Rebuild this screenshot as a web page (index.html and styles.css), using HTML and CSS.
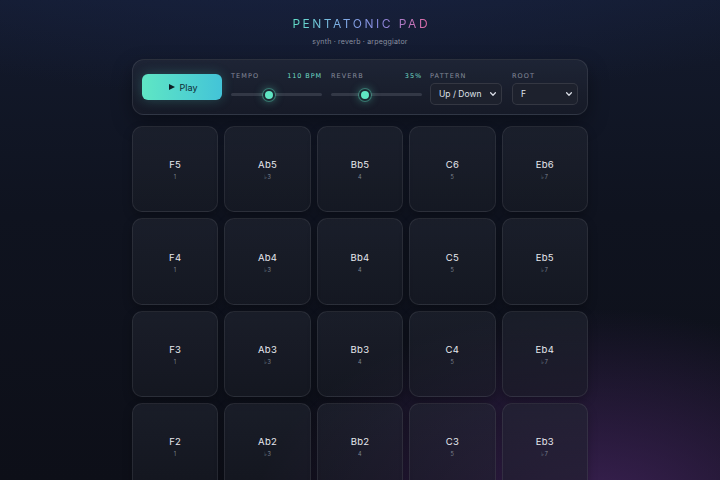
FILE: index.html
```html
<!DOCTYPE html>
<html>
<head>
<meta charset="utf-8">
<link rel="stylesheet" href="styles.css">
</head>
<body>
<main class="app">
  <header class="head">
    <h1 class="title">PENTATONIC PAD</h1>
    <p class="sub">synth · reverb · arpeggiator</p>
  </header>
  <section class="panel">
    <button class="play"><span class="tri"></span>Play</button>
    <div class="ctl slider-ctl">
      <div class="lbl"><span>TEMPO</span><span class="val">110 BPM</span></div>
      <div class="track"><span class="thumb" style="left:42%"></span></div>
    </div>
    <div class="ctl slider-ctl">
      <div class="lbl"><span>REVERB</span><span class="val">35%</span></div>
      <div class="track"><span class="thumb" style="left:37%"></span></div>
    </div>
    <div class="ctl sel-ctl pattern">
      <div class="lbl"><span>PATTERN</span></div>
      <div class="select"><span>Up / Down</span><svg viewBox="0 0 10 10" width="8" height="8"><path d="M2 3.5 L5 6.5 L8 3.5" fill="none" stroke="#d8dce4" stroke-width="1.6" stroke-linecap="round" stroke-linejoin="round"/></svg></div>
    </div>
    <div class="ctl sel-ctl root">
      <div class="lbl"><span>ROOT</span></div>
      <div class="select"><span>F</span><svg viewBox="0 0 10 10" width="8" height="8"><path d="M2 3.5 L5 6.5 L8 3.5" fill="none" stroke="#d8dce4" stroke-width="1.6" stroke-linecap="round" stroke-linejoin="round"/></svg></div>
    </div>
  </section>
  <section class="grid">
    <div class="pad"><span class="n">F5</span><span class="d">1</span></div>
    <div class="pad"><span class="n">Ab5</span><span class="d">♭3</span></div>
    <div class="pad"><span class="n">Bb5</span><span class="d">4</span></div>
    <div class="pad"><span class="n">C6</span><span class="d">5</span></div>
    <div class="pad"><span class="n">Eb6</span><span class="d">♭7</span></div>
    <div class="pad"><span class="n">F4</span><span class="d">1</span></div>
    <div class="pad"><span class="n">Ab4</span><span class="d">♭3</span></div>
    <div class="pad"><span class="n">Bb4</span><span class="d">4</span></div>
    <div class="pad"><span class="n">C5</span><span class="d">5</span></div>
    <div class="pad"><span class="n">Eb5</span><span class="d">♭7</span></div>
    <div class="pad"><span class="n">F3</span><span class="d">1</span></div>
    <div class="pad"><span class="n">Ab3</span><span class="d">♭3</span></div>
    <div class="pad"><span class="n">Bb3</span><span class="d">4</span></div>
    <div class="pad"><span class="n">C4</span><span class="d">5</span></div>
    <div class="pad"><span class="n">Eb4</span><span class="d">♭7</span></div>
    <div class="pad"><span class="n">F2</span><span class="d">1</span></div>
    <div class="pad"><span class="n">Ab2</span><span class="d">♭3</span></div>
    <div class="pad"><span class="n">Bb2</span><span class="d">4</span></div>
    <div class="pad"><span class="n">C3</span><span class="d">5</span></div>
    <div class="pad"><span class="n">Eb3</span><span class="d">♭7</span></div>
  </section>
</main>
</body>
</html>
```
FILE: styles.css
```css
* { box-sizing: border-box; }
html, body { margin: 0; height: 100%; }
body {
  overflow: hidden;
  font-family: Inter, "Noto Sans", sans-serif;
  color: #e4e7ee;
  background:
    radial-gradient(ellipse 480px 300px at 82% 108%, rgba(72, 38, 100, 0.8), rgba(72,38,100,0) 70%),
    radial-gradient(ellipse 900px 260px at 45% -20%, rgba(26, 38, 74, 0.95), rgba(26,38,74,0) 75%),
    linear-gradient(180deg, #131a2d 0%, #0f131f 45%, #0d0f18 100%);
}
.app {
  width: 456px;
  margin: 0 auto;
  padding-top: 16px;
}
.head { display: flex; flex-direction: column; align-items: center; }
.title {
  margin: 0;
  font-size: 12px;
  font-weight: 400;
  letter-spacing: 2.5px;
  line-height: 16px;
  background: linear-gradient(90deg, #5fe3c6 0%, #7fb0e8 35%, #8a88e0 65%, #e46aa4 100%);
  -webkit-background-clip: text;
  background-clip: text;
  color: transparent;
  padding-left: 2.5px;
}
.sub {
  margin: 5px 0 0;
  font-size: 7px;
  line-height: 10px;
  color: #8a90a0;
  letter-spacing: 0.2px;
}
.panel {
  margin-top: 12px;
  height: 56px;
  border-radius: 12px;
  border: 1px solid rgba(255,255,255,0.09);
  background: linear-gradient(180deg, rgba(34,40,56,0.75), rgba(24,28,40,0.75));
  box-shadow: 0 8px 20px rgba(0,0,0,0.35);
  display: flex;
  align-items: center;
  padding: 0 9px;
  gap: 9px;
}
.play {
  width: 80px;
  height: 26px;
  border: 0;
  border-radius: 6px;
  background: linear-gradient(90deg, #5fe6c4, #43c4d8);
  color: #0f2a33;
  font-family: Inter, sans-serif;
  font-size: 9px;
  display: flex;
  align-items: center;
  justify-content: center;
  gap: 5px;
  box-shadow: 0 0 12px rgba(80, 220, 200, 0.25);
  padding: 0 0 0 2px;
}
.tri {
  width: 0; height: 0;
  border-left: 6px solid #0f1d24;
  border-top: 3.5px solid transparent;
  border-bottom: 3.5px solid transparent;
}
.ctl { display: flex; flex-direction: column; align-self: stretch; padding-top: 12px; }
.slider-ctl { width: 91px; }
.lbl {
  display: flex;
  justify-content: space-between;
  font-size: 6.5px;
  line-height: 8px;
  letter-spacing: 1.1px;
  color: #858b9a;
  font-family: "DejaVu Sans", sans-serif;
}
.lbl .val { color: #6fd9c6; letter-spacing: 0.9px; }
.track {
  position: relative;
  margin-top: 13px;
  height: 3px;
  border-radius: 2px;
  background: #333846;
}
.thumb {
  position: absolute;
  top: 50%;
  width: 12px; height: 12px;
  margin: -6px 0 0 -6px;
  border-radius: 50%;
  background: #5fe6c4;
  border: 2px solid #1b2a33;
  box-shadow: 0 0 0 1px rgba(95,230,196,0.35), 0 0 8px rgba(95,230,196,0.5);
}
.pattern { width: 72px; margin-left: -1px; }
.root { width: 66px; margin-left: 1px; }
.select {
  margin-top: 3px;
  height: 22px;
  border-radius: 5px;
  border: 1px solid rgba(255,255,255,0.1);
  background: #1d212d;
  display: flex;
  align-items: center;
  justify-content: space-between;
  padding: 0 4px 0 8px;
  font-size: 8.5px;
  color: #dde0e8;
}
.grid {
  margin-top: 11px;
  display: grid;
  grid-template-columns: repeat(5, 1fr);
  gap: 6px;
}
.pad {
  height: 86.4px;
  border-radius: 10px;
  border: 1px solid rgba(255,255,255,0.08);
  background: linear-gradient(180deg, rgba(36,40,52,0.55), rgba(26,29,38,0.55));
  box-shadow: 0 4px 10px rgba(0,0,0,0.25);
  display: flex;
  flex-direction: column;
  align-items: center;
  justify-content: center;
  padding-top: 2px;
}
.n { font-size: 9.5px; line-height: 12px; color: #e6e8ee; letter-spacing: 0.3px; }
.d { font-size: 5.5px; line-height: 8px; margin-top: 2px; color: #7d8392; letter-spacing: 0.6px; }
```
